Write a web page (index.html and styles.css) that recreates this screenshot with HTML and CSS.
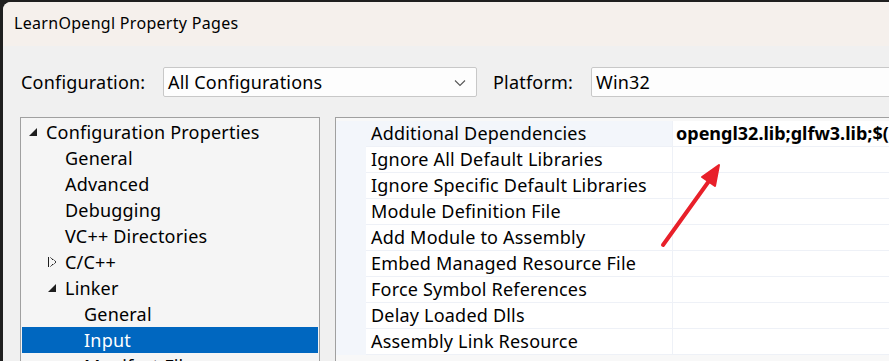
FILE: index.html
```html
<!DOCTYPE html>
<html>
<head>
    <title>LearnOpengl Property Pages</title>
    <link rel="stylesheet" href="styles.css">
</head>
<body>
    <div class="window">
        <div class="title-bar">LearnOpengl Property Pages</div>
        <div class="config-row">
            <label class="config-label">Configuration:</label>
            <div class="combo combo-config">
                <span>All Configurations</span>
                <svg class="chevron" width="12" height="8" viewBox="0 0 12 8"><path d="M1 1.5 L6 6.5 L11 1.5" fill="none" stroke="#555" stroke-width="1.1"/></svg>
            </div>
            <label class="config-label platform-label">Platform:</label>
            <div class="combo combo-platform">
                <span>Win32</span>
            </div>
        </div>
        <div class="panels">
            <div class="tree">
                <div class="tree-item level-0"><span class="expander open"></span>Configuration Properties</div>
                <div class="tree-item level-1">General</div>
                <div class="tree-item level-1">Advanced</div>
                <div class="tree-item level-1">Debugging</div>
                <div class="tree-item level-1">VC++ Directories</div>
                <div class="tree-item level-1"><span class="expander closed"></span>C/C++</div>
                <div class="tree-item level-1"><span class="expander open"></span>Linker</div>
                <div class="tree-item level-2">General</div>
                <div class="tree-item level-2 selected">Input</div>
                <div class="tree-item level-2">Manifest File</div>
            </div>
            <div class="grid">
                <div class="prop-row current">
                    <div class="gutter"></div>
                    <div class="prop-name">Additional Dependencies</div>
                    <div class="prop-value">opengl32.lib;glfw3.lib;$(CoreLibraryDependencies)</div>
                </div>
                <div class="prop-row">
                    <div class="gutter"></div>
                    <div class="prop-name">Ignore All Default Libraries</div>
                    <div class="prop-value"></div>
                </div>
                <div class="prop-row">
                    <div class="gutter"></div>
                    <div class="prop-name">Ignore Specific Default Libraries</div>
                    <div class="prop-value"></div>
                </div>
                <div class="prop-row">
                    <div class="gutter"></div>
                    <div class="prop-name">Module Definition File</div>
                    <div class="prop-value"></div>
                </div>
                <div class="prop-row">
                    <div class="gutter"></div>
                    <div class="prop-name">Add Module to Assembly</div>
                    <div class="prop-value"></div>
                </div>
                <div class="prop-row">
                    <div class="gutter"></div>
                    <div class="prop-name">Embed Managed Resource File</div>
                    <div class="prop-value"></div>
                </div>
                <div class="prop-row">
                    <div class="gutter"></div>
                    <div class="prop-name">Force Symbol References</div>
                    <div class="prop-value"></div>
                </div>
                <div class="prop-row">
                    <div class="gutter"></div>
                    <div class="prop-name">Delay Loaded Dlls</div>
                    <div class="prop-value"></div>
                </div>
                <div class="prop-row">
                    <div class="gutter"></div>
                    <div class="prop-name">Assembly Link Resource</div>
                    <div class="prop-value"></div>
                </div>
            </div>
        </div>
        <!-- annotation arrow drawn over the grid -->
        <svg class="arrow" width="90" height="100" viewBox="0 0 90 100">
            <path d="M15 86 L61 22" stroke="#e8202a" stroke-width="4" stroke-linecap="round" fill="none"/>
            <path d="M71 6 L54 18 L67 27 Z" fill="#e8202a" stroke="#e8202a" stroke-width="2" stroke-linejoin="round"/>
        </svg>
    </div>
</body>
</html>
```

FILE: styles.css
```css
body {
    margin: 0;
    background-color: #1f1f1f;
    font-family: "Noto Sans", "Segoe UI", sans-serif;
    color: #000;
    overflow: hidden;
    height: 361px;
}

.window {
    position: relative;
    margin-top: 2px;
    margin-left: 3px;
    height: 400px;
    background-color: #f0f0f0;
    border-top-left-radius: 8px;
    overflow: hidden;
}

.title-bar {
    height: 44px;
    background-color: #f5f0ec;
    font-size: 16px;
    letter-spacing: 0.3px;
    line-height: 42px;
    padding-left: 11px;
}

.config-row {
    display: flex;
    align-items: center;
    margin-top: 21px;
    height: 30px;
    font-size: 18px;
    letter-spacing: 0.2px;
}

.config-label {
    flex-shrink: 0;
    margin-left: 18px;
    width: 142px;
}

.platform-label {
    margin-left: 16px;
    width: 98px;
}

.combo {
    box-sizing: border-box;
    flex-shrink: 0;
    height: 30px;
    background-color: #fdfdfd;
    border: 1px solid #c8c8c8;
    border-radius: 2px;
    display: flex;
    align-items: center;
    justify-content: space-between;
    padding-left: 4px;
    padding-right: 10px;
}

.combo-config {
    width: 314px;
}

.combo-platform {
    width: 320px;
}

.chevron {
    margin-top: 1px;
}

.panels {
    display: flex;
    margin-top: 20px;
    margin-left: 17px;
    gap: 15px;
}

.tree {
    box-sizing: border-box;
    flex-shrink: 0;
    width: 300px;
    height: 260px;
    background-color: #f5f5f5;
    border: 1px solid #a0a0a0;
    padding-top: 1px;
}

.tree-item {
    position: relative;
    height: 26px;
    line-height: 26px;
    font-size: 18px;
    letter-spacing: 0.2px;
    margin: 0 1px;
    white-space: nowrap;
}

.level-0 { padding-left: 24px; }
.level-1 { padding-left: 43px; }
.level-2 { padding-left: 62px; }

.selected {
    background-color: #0067c0;
    color: #fff;
}

.expander {
    position: absolute;
    top: 9px;
    width: 0;
    height: 0;
}

.level-0 .expander { left: 7px; }
.level-1 .expander { left: 26px; }

.expander.open {
    border-left: 8px solid transparent;
    border-bottom: 8px solid #1e1e1e;
}

.expander.closed {
    top: 8px;
    width: 7px;
    height: 10px;
    background: linear-gradient(to top right, transparent 49%, #1e1e1e 50%, transparent 62%) top / 7px 5px no-repeat,
                linear-gradient(to bottom right, transparent 49%, #1e1e1e 50%, transparent 62%) bottom / 7px 5px no-repeat;
    border-left: 1px solid #1e1e1e;
}

.grid {
    box-sizing: border-box;
    flex: 1;
    height: 260px;
    background-color: #f8f8f8;
    border: 1px solid #a0a0a0;
    border-right: none;
    padding-top: 3px;
    overflow: hidden;
}

.prop-row {
    display: flex;
    height: 26px;
    font-size: 18px;
    letter-spacing: 0.2px;
    line-height: 25px;
}

.gutter {
    width: 30px;
    flex-shrink: 0;
    background-color: #f3f6fb;
}

.prop-name {
    width: 301px;
    flex-shrink: 0;
    padding-left: 5px;
    background-color: #fff;
    border-bottom: 1px solid #eef1f7;
    border-right: 1px solid #eef1f7;
    white-space: nowrap;
}

.current .prop-name {
    background-color: #f3f6fb;
}

.prop-value {
    flex: 1;
    padding-left: 3px;
    background-color: #fff;
    border-bottom: 1px solid #eef1f7;
    font-weight: bold;
    letter-spacing: 0;
    white-space: nowrap;
    overflow: hidden;
}

.arrow {
    position: absolute;
    left: 645px;
    top: 157px;
}
```
